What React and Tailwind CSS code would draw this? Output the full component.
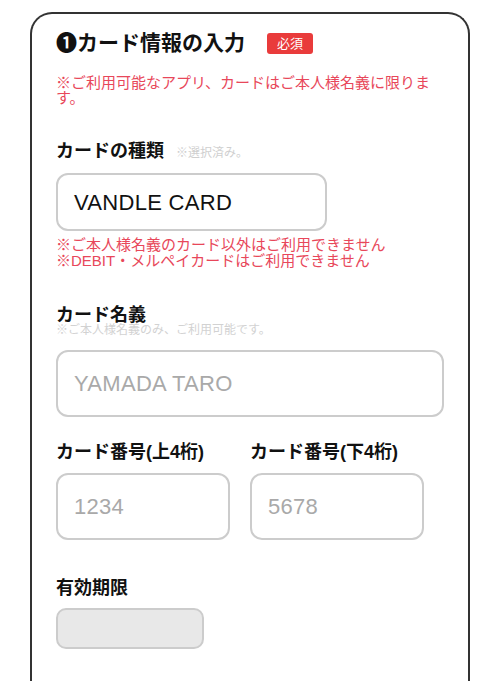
import React from 'react';

const jp = { fontFamily: '"Liberation Sans", "Noto Sans CJK JP", sans-serif' };

const Label = ({ children, note }) => (
  <div className="flex items-baseline gap-3">
    <span className="text-[18px] font-bold leading-[18px] text-[#111]">{children}</span>
    {note && <span className="text-[12px] leading-[12px] text-[#cfcfcf]">{note}</span>}
  </div>
);

const Field = ({ value, placeholder, className }) => (
  <div
    className={`flex items-center rounded-[12px] border-2 border-[#cccccc] bg-white px-[16px] text-[22px] tracking-[0.3px] ${className}`}
  >
    {value ? (
      <span className="text-[#111]">{value}</span>
    ) : (
      <span className="text-[#a9a9a9]">{placeholder}</span>
    )}
  </div>
);

export default function App() {
  return (
    <div className="min-h-[681px] bg-white pt-[12px]" style={jp}>
      <div className="ml-[30px] h-[700px] w-[440px] rounded-t-[22px] border-2 border-b-0 border-[#333] pl-[24px] pr-[24px] pt-[15px]">
        {/* Heading */}
        <div className="flex items-center">
          <h2 className="text-[21px] font-bold leading-[28px] text-[#111]">❶カード情報の入力</h2>
          <span className="ml-[22px] rounded-[3px] bg-[#e93b3b] px-[10px] text-[13px] leading-[21px] text-white">
            必須
          </span>
        </div>

        <p className="mt-[18px] text-[15px] leading-[15px] text-[#e8475a]">
          ※ご利用可能なアプリ、カードはご本人様名義に限ります。
        </p>

        {/* Card type */}
        <div className="mt-[37px]">
          <Label note="※選択済み。">カードの種類</Label>
        </div>
        <Field value="VANDLE CARD" className="mt-[13px] h-[58px] w-[271px]" />
        <div className="mt-[6px] text-[15px] leading-[16px] text-[#e8475a]">
          <p>※ご本人様名義のカード以外はご利用できません</p>
          <p>※DEBIT・メルペイカードはご利用できません</p>
        </div>

        {/* Card holder */}
        <div className="mt-[37px]">
          <span className="block text-[18px] font-bold leading-[18px] text-[#111]">カード名義</span>
          <span className="block text-[12px] leading-[12px] text-[#d2d2d2]">※ご本人様名義のみ、ご利用可能です。</span>
        </div>
        <Field placeholder="YAMADA TARO" className="mt-[14px] h-[67px] w-[388px]" />

        {/* Card number */}
        <div className="mt-[26px] grid w-[368px] grid-cols-2 gap-x-[20px]">
          <div>
            <Label>カード番号(上4桁)</Label>
            <Field placeholder="1234" className="mt-[12px] h-[67px] w-[174px]" />
          </div>
          <div>
            <Label>カード番号(下4桁)</Label>
            <Field placeholder="5678" className="mt-[12px] h-[67px] w-[174px]" />
          </div>
        </div>

        {/* Expiry */}
        <div className="mt-[39px]">
          <Label>有効期限</Label>
        </div>
        <div className="mt-[11px] h-[41px] w-[148px] rounded-[10px] border-2 border-[#cccccc] bg-[#e8e8e8]" />
      </div>
    </div>
  );
}
